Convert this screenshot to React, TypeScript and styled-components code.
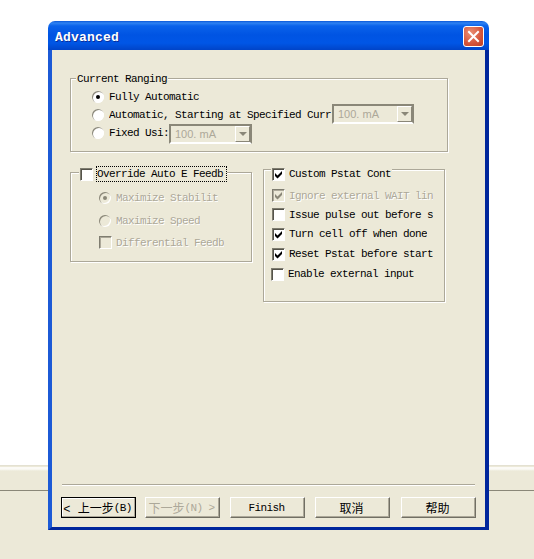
import styled, { createGlobalStyle } from "styled-components";

const GlobalStyle = createGlobalStyle`
  html, body {
    margin: 0;
    padding: 0;
    background: #ece9d8;
  }
  body {
    font-family: "Liberation Mono", "Noto Sans CJK SC", monospace;
    font-size: 11px;
    letter-spacing: -0.6px;
    color: #000;
  }
`;

const Page = styled.div`
  position: relative;
  width: 534px;
  height: 559px;
  overflow: hidden;
  display: flex;
  flex-direction: column;
  background: #ece9d8;
`;

const BackdropWhite = styled.div`
  height: 465px;
  background: #fff;
`;

const BackdropBar = styled.div`
  height: 26px;
  box-sizing: border-box;
  background: linear-gradient(#e4e1d2 0 1px, #ece9d8 1px 2px, #fbfaf6 2px 4px, #ece9d8 6px);
  border-bottom: 1px solid #8a8778;
`;

const Window = styled.div`
  position: absolute;
  left: 48px;
  top: 21px;
  width: 441px;
  height: 509px;
  display: flex;
  flex-direction: column;
`;

const TitleBar = styled.div`
  flex: none;
  height: 29px;
  box-sizing: border-box;
  padding: 1px 5px 0 7px;
  display: flex;
  align-items: center;
  justify-content: space-between;
  border-radius: 7px 7px 0 0;
  background: linear-gradient(#0a57d8 0, #2f83f2 2px, #0a62ea 5px, #0054e3 14px, #0056e6 22px, #0044c8 29px);
`;

const TitleText = styled.span`
  margin-top: 2px;
  font-size: 13px;
  font-weight: 700;
  letter-spacing: 0.2px;
  color: #fff;
  text-shadow: 1px 1px 0 #0a2f9c;
`;

const CloseButton = styled.div`
  width: 21px;
  height: 21px;
  box-sizing: border-box;
  border: 1px solid #fff;
  border-radius: 3px;
  display: flex;
  align-items: center;
  justify-content: center;
  background: radial-gradient(circle at 35% 30%, #ea8f74, #d5543a 60%, #bd3f25);
`;

const Client = styled.div`
  flex: 1;
  min-height: 0;
  box-sizing: border-box;
  display: flex;
  flex-direction: column;
  padding: 28px 9px 9px 18px;
  background: #ece9d8;
  border-left: 4px solid #1c5ad6;
  border-right: 4px solid #00269c;
  border-bottom: 3px solid #00269c;
`;

const Group = styled.div<{ $width: number; $height: number; $top?: number }>`
  position: relative;
  box-sizing: border-box;
  flex: none;
  width: ${(p) => p.$width}px;
  height: ${(p) => p.$height}px;
  margin-top: ${(p) => p.$top ?? 0}px;
  border: 1px solid #aca899;
  box-shadow: 1px 1px 0 #fff, inset 1px 1px 0 #fff;
`;

const GroupTitle = styled.div<{ $left: number; $top: number }>`
  position: absolute;
  left: ${(p) => p.$left}px;
  top: ${(p) => p.$top}px;
  height: 14px;
  padding: 0 1px;
  display: flex;
  align-items: center;
  background: #ece9d8;
  white-space: nowrap;
`;

const RangingRows = styled.div`
  padding: 9px 0 0 21px;
  display: flex;
  flex-direction: column;
`;

const Row = styled.div<{ $height?: number }>`
  height: ${(p) => p.$height ?? 18}px;
  display: flex;
  align-items: center;
`;

const Label = styled.span<{ $disabled?: boolean; $clip?: number; $focus?: boolean }>`
  display: block;
  white-space: nowrap;
  overflow: hidden;
  line-height: 14px;
  ${(p) => (p.$clip ? `width: ${p.$clip}px; flex: none;` : "")}
  ${(p) => (p.$focus ? "outline: 1px dotted #000; outline-offset: 0; padding-right: 3px;" : "")}
  color: ${(p) => (p.$disabled ? "#aca899" : "#000")};
  text-shadow: ${(p) => (p.$disabled ? "1px 1px 0 #fff" : "none")};
`;

const Radio = styled.span<{ $checked?: boolean; $disabled?: boolean }>`
  flex: none;
  position: relative;
  width: 12px;
  height: 12px;
  margin-right: 5px;
  border-radius: 50%;
  background: ${(p) => (p.$disabled ? "#ece9d8" : "#fff")};
  box-shadow: inset 1px 1px 0 #8a8778, inset -1px -1px 0 #fff;

  &::after {
    content: "";
    display: ${(p) => (p.$checked ? "block" : "none")};
    position: absolute;
    left: 4px;
    top: 4px;
    width: 4px;
    height: 4px;
    border-radius: 50%;
    background: ${(p) => (p.$disabled ? "#8a8778" : "#000")};
  }
`;

const CheckBox = styled.span<{ $disabled?: boolean; $shift?: number }>`
  flex: none;
  width: 13px;
  height: 13px;
  box-sizing: border-box;
  margin-left: ${(p) => p.$shift ?? 0}px;
  margin-right: 4px;
  display: flex;
  align-items: center;
  justify-content: center;
  border-top: 1px solid #7f7d70;
  border-left: 1px solid #7f7d70;
  border-right: 1px solid #fff;
  border-bottom: 1px solid #fff;
  background: ${(p) => (p.$disabled ? "#ece9d8" : "#fff")};
  box-shadow: inset 1px 1px 0 ${(p) => (p.$disabled ? "#aca899" : "#55534a")};
`;

const Combo = styled.div<{ $width: number; $shift: number }>`
  flex: none;
  width: ${(p) => p.$width}px;
  height: 20px;
  margin-top: ${(p) => p.$shift}px;
  box-sizing: border-box;
  padding-left: 4px;
  display: flex;
  align-items: center;
  justify-content: space-between;
  border-top: 2px solid #8a8778;
  border-left: 2px solid #8a8778;
  border-right: 2px solid #8a8778;
  border-bottom: 2px solid #fff;
  background: #ece9d8;
  font-family: "Liberation Sans", sans-serif;
  font-size: 11px;
  letter-spacing: 0;
  color: #aca899;
`;

const ComboArrow = styled.div`
  width: 15px;
  height: 16px;
  box-sizing: border-box;
  display: flex;
  align-items: center;
  justify-content: center;
  border-top: 1px solid #fff;
  border-left: 1px solid #fff;
  border-right: 1px solid #8a8778;
  border-bottom: 1px solid #8a8778;
`;

const ArrowGlyph = styled.span`
  width: 0;
  height: 0;
  border-left: 4px solid transparent;
  border-right: 4px solid transparent;
  border-top: 4px solid #8a8778;
`;

const Columns = styled.div`
  display: flex;
  gap: 11px;
  margin-top: 16px;
`;

const LeftRows = styled.div`
  padding: 13px 0 0 28px;
  display: flex;
  flex-direction: column;
`;

const RightRows = styled.div`
  padding: 16px 0 0 8px;
  display: flex;
  flex-direction: column;
`;

const Footer = styled.div`
  margin-top: auto;
`;

const Separator = styled.div`
  width: 413px;
  margin-left: -8px;
  height: 1px;
  background: #aca899;
  box-shadow: 0 1px 0 #fff;
`;

const ButtonRow = styled.div`
  display: flex;
  margin: 12px 0 0 -9px;
`;

const WizardButton = styled.div<{ $gap?: number; $focus?: boolean; $disabled?: boolean }>`
  flex: none;
  width: 75px;
  height: 21px;
  box-sizing: border-box;
  margin-left: ${(p) => p.$gap ?? 0}px;
  padding-right: 2px;
  display: flex;
  align-items: center;
  justify-content: center;
  font-size: 12px;
  letter-spacing: 0;
  white-space: nowrap;
  color: ${(p) => (p.$disabled ? "#aca899" : "#000")};
  background: #ece9d8;
  border: 1px solid ${(p) => (p.$focus ? "#000" : "transparent")};
  border-top-color: ${(p) => (p.$focus ? "#000" : "#fff")};
  border-left-color: ${(p) => (p.$focus ? "#000" : "#fff")};
  border-right-color: ${(p) => (p.$focus ? "#000" : "#716f64")};
  border-bottom-color: ${(p) => (p.$focus ? "#000" : "#716f64")};
  box-shadow: inset -1px -1px 0 #aca899${(p) => (p.$focus ? ", inset 1px 1px 0 #fff" : "")};
`;

const Latin = styled.span`
  font-size: 11px;
  letter-spacing: -0.6px;
`;

const CheckIcon = ({ color = "#000" }: { color?: string }) => (
  <svg width="9" height="9" viewBox="0 0 9 9">
    <path d="M1 3 L3.5 5.5 L8 1 V4 L3.5 8.5 L1 6 Z" fill={color} />
  </svg>
);

const CloseIcon = () => (
  <svg width="13" height="13" viewBox="0 0 13 13">
    <path d="M2 2 L11 11 M11 2 L2 11" stroke="#fff" strokeWidth="2" strokeLinecap="square" />
  </svg>
);

const rightRows = [
  { text: "Ignore external WAIT lin", checked: true, disabled: true, height: 19 },
  { text: "Issue pulse out before s", checked: false, disabled: false, height: 19 },
  { text: "Turn cell off when done", checked: true, disabled: false, height: 20 },
  { text: "Reset Pstat before start", checked: true, disabled: false, height: 20 },
  { text: "Enable external input", checked: false, disabled: false, height: 20 },
];

export default function App() {
  return (
    <Page>
      <GlobalStyle />
      <BackdropWhite />
      <BackdropBar />
      <Window>
        <TitleBar>
          <TitleText>Advanced</TitleText>
          <CloseButton>
            <CloseIcon />
          </CloseButton>
        </TitleBar>
        <Client>
          <Group $width={378} $height={74}>
            <GroupTitle $left={5} $top={-7}>Current Ranging</GroupTitle>
            <RangingRows>
              <Row>
                <Radio $checked />
                <Label>Fully Automatic</Label>
              </Row>
              <Row>
                <Radio />
                <Label $clip={223}>Automatic, Starting at Specified Curr</Label>
                <Combo $width={82} $shift={-2}>
                  100. mA
                  <ComboArrow>
                    <ArrowGlyph />
                  </ComboArrow>
                </Combo>
              </Row>
              <Row>
                <Radio />
                <Label $clip={60}>Fixed Usi:</Label>
                <Combo $width={83} $shift={2}>
                  100. mA
                  <ComboArrow>
                    <ArrowGlyph />
                  </ComboArrow>
                </Combo>
              </Row>
            </RangingRows>
          </Group>
          <Columns>
            <Group $width={182} $height={90} $top={4}>
              <GroupTitle $left={8} $top={-6}>
                <CheckBox />
                <Label $focus>Override Auto E Feedb</Label>
              </GroupTitle>
              <LeftRows>
                <Row $height={23}>
                  <Radio $checked $disabled />
                  <Label $disabled>Maximize Stabilit</Label>
                </Row>
                <Row $height={23}>
                  <Radio $disabled />
                  <Label $disabled>Maximize Speed</Label>
                </Row>
                <Row $height={21}>
                  <CheckBox $disabled />
                  <Label $disabled>Differential Feedb</Label>
                </Row>
              </LeftRows>
            </Group>
            <Group $width={182} $height={133} $top={1}>
              <GroupTitle $left={7} $top={-3}>
                <CheckBox>
                  <CheckIcon />
                </CheckBox>
                <Label>Custom Pstat Cont</Label>
              </GroupTitle>
              <RightRows>
                {rightRows.map((row, i) => (
                  <Row key={row.text} $height={row.height}>
                    <CheckBox $disabled={row.disabled} $shift={i === 4 ? -1 : 0}>
                      {row.checked && <CheckIcon color={row.disabled ? "#8a8778" : "#000"} />}
                    </CheckBox>
                    <Label $disabled={row.disabled}>{row.text}</Label>
                  </Row>
                ))}
              </RightRows>
            </Group>
          </Columns>
          <Footer>
            <Separator />
            <ButtonRow>
              <WizardButton $focus>&lt; 上一步<Latin>(B)</Latin></WizardButton>
              <WizardButton $gap={9} $disabled>下一步<Latin>(N) &gt;</Latin></WizardButton>
              <WizardButton $gap={10}><Latin>Finish</Latin></WizardButton>
              <WizardButton $gap={10}>取消</WizardButton>
              <WizardButton $gap={11}>帮助</WizardButton>
            </ButtonRow>
          </Footer>
        </Client>
      </Window>
    </Page>
  );
}
